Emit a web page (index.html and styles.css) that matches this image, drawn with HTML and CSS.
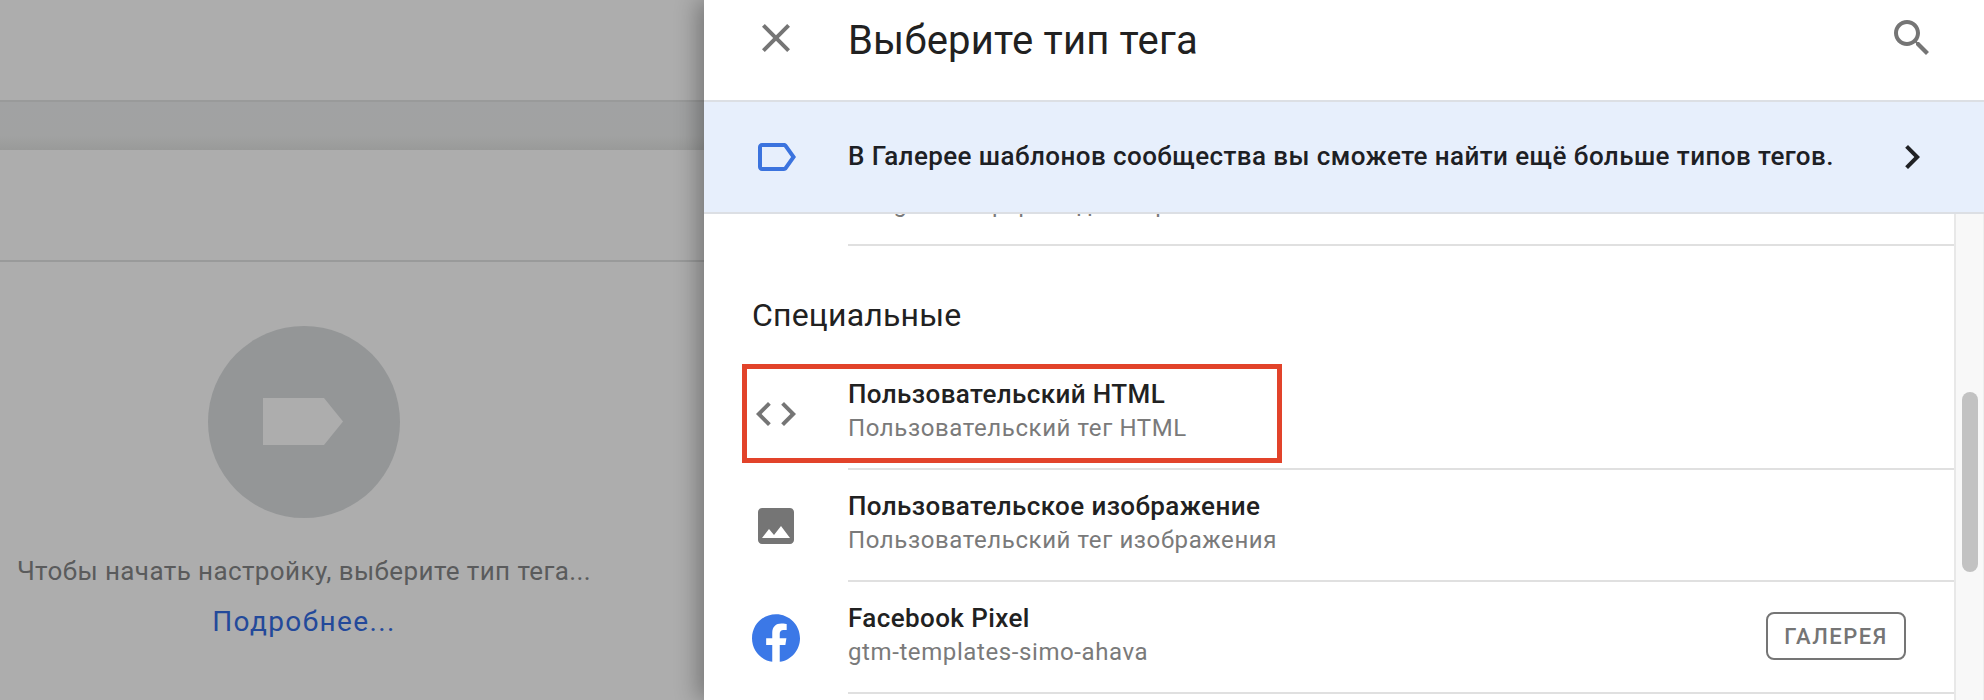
FILE: index.html
```html
<!DOCTYPE html>
<html lang="ru">
<head>
<meta charset="utf-8">
<title>Выберите тип тега</title>
<link rel="stylesheet" href="styles.css">
</head>
<body>
<div class="page">
  <section class="editor">
    <div class="editor-top"></div>
    <div class="editor-band"></div>
    <div class="editor-sub"></div>
    <div class="empty">
      <div class="empty-circle">
        <svg class="empty-tag" viewBox="0 0 80 47"><path d="M0 0H61L80 23.5 61 47H0z"/></svg>
      </div>
      <p class="empty-text">Чтобы начать настройку, выберите тип тега...</p>
      <a class="empty-link">Подробнее...</a>
    </div>
  </section>
  <aside class="panel">
    <header class="panel-head">
      <svg class="icon" viewBox="0 0 24 24"><path d="M19 6.41L17.59 5 12 10.59 6.41 5 5 6.41 10.59 12 5 17.59 6.41 19 12 13.41 17.59 19 19 17.59 13.41 12z"/></svg>
      <h1 class="panel-title">Выберите тип тега</h1>
      <svg class="icon search" viewBox="0 0 24 24"><path d="M15.5 14h-.79l-.28-.27C15.41 12.59 16 11.11 16 9.5 16 5.91 13.09 3 9.5 3S3 5.91 3 9.5 5.91 16 9.5 16c1.61 0 3.09-.59 4.23-1.57l.27.28v.79l5 4.99L20.49 19l-4.99-5zm-6 0C7.01 14 5 11.99 5 9.5S7.01 5 9.5 5 14 7.01 14 9.5 11.99 14 9.5 14z"/></svg>
    </header>
    <div class="promo">
      <svg class="icon icon-blue" viewBox="0 0 24 24"><path d="M17.63 5.84C17.27 5.33 16.67 5 16 5L5 5.01C3.9 5.01 3 5.9 3 7v10c0 1.1.9 1.99 2 1.99L16 19c.67 0 1.27-.33 1.63-.84L22 12l-4.37-6.16zM16 17H5V7h11l3.55 5L16 17z"/></svg>
      <span class="promo-text">В Галерее шаблонов сообщества вы сможете найти ещё больше типов тегов.</span>
      <svg class="icon icon-dark" viewBox="0 0 24 24"><path d="M10 6L8.59 7.41 13.17 12l-4.58 4.59L10 18l6-6z"/></svg>
    </div>
    <div class="body">
      <div class="list">
        <div class="clipped-row"><div class="row-sub">Google Обзор фото для партий</div></div>
        <h2 class="section-title">Специальные</h2>
        <div class="row">
          <svg class="icon" viewBox="0 0 24 24"><path d="M9.4 16.6L4.8 12l4.6-4.6L8 6l-6 6 6 6 1.4-1.4zm5.2 0l4.6-4.6-4.6-4.6L16 6l6 6-6 6-1.4-1.4z"/></svg>
          <div class="row-main">
            <div class="row-title">Пользовательский HTML</div>
            <div class="row-sub">Пользовательский тег HTML</div>
          </div>
          <div class="highlight"></div>
        </div>
        <div class="row">
          <svg class="icon" viewBox="0 0 24 24"><path d="M21 19V5c0-1.1-.9-2-2-2H5c-1.1 0-2 .9-2 2v14c0 1.1.9 2 2 2h14c1.1 0 2-.9 2-2zM8.5 13.5l2.5 3.01L14.5 12l4.5 6H5l3.5-4.5z"/></svg>
          <div class="row-main">
            <div class="row-title">Пользовательское изображение</div>
            <div class="row-sub">Пользовательский тег изображения</div>
          </div>
        </div>
        <div class="row">
          <svg class="icon icon-fb" viewBox="0 0 24 24"><path d="M24 12.073c0-6.627-5.373-12-12-12s-12 5.373-12 12c0 5.99 4.388 10.954 10.125 11.854v-8.385H7.078v-3.47h3.047V9.43c0-3.007 1.792-4.669 4.533-4.669 1.312 0 2.686.235 2.686.235v2.953H15.83c-1.491 0-1.956.925-1.956 1.874v2.25h3.328l-.532 3.47h-2.796v8.385C19.612 23.027 24 18.062 24 12.073z"/></svg>
          <div class="row-main">
            <div class="row-title">Facebook Pixel</div>
            <div class="row-sub">gtm-templates-simo-ahava</div>
          </div>
          <span class="badge">ГАЛЕРЕЯ</span>
        </div>
      </div>
      <div class="track"><div class="thumb"></div></div>
    </div>
  </aside>
</div>
</body>
</html>
```
FILE: styles.css
```css
* { box-sizing: border-box; }
html, body { margin: 0; height: 100%; overflow: hidden; }
body { font-family: Roboto, "Liberation Sans", sans-serif; background: #adadad; }

.page { display: flex; width: 1984px; height: 700px; }

/* dimmed page underneath */
.editor { width: 704px; flex: none; background: #adadad; }
.editor-top { height: 102px; border-bottom: 2px solid #999a9a; }
.editor-band { height: 48px; background: linear-gradient(#a1a2a3 0, #a1a2a2 70%, #999a99 100%); }
.editor-sub { height: 112px; border-bottom: 2px solid #999a9a; }
.empty { display: flex; flex-direction: column; align-items: center; padding: 64px 96px 0 0; }
.empty-circle { width: 192px; height: 192px; border-radius: 50%; background: #949697; display: flex; align-items: center; justify-content: center; }
.empty-tag { width: 80px; height: 47px; margin-left: -2px; margin-top: -2px; fill: #adadad; }
.empty-text { margin: 36px 0 0; font-size: 26px; line-height: 34px; letter-spacing: .4px; color: #5a5b5c; white-space: nowrap; }
.empty-link { margin-top: 16px; font-size: 28px; line-height: 36px; letter-spacing: 1.4px; color: #23499a; }

/* right panel */
.panel { width: 1280px; flex: none; display: flex; flex-direction: column; background: #fff; position: relative; box-shadow: -6px 0 22px rgba(0,0,0,.32); }
.icon { width: 48px; height: 48px; flex: none; fill: #757575; display: block; }
.icon-blue { fill: #3b73de; }
.icon-dark { fill: #202124; margin-top: -1px; }
.icon-fb { fill: #3b78e7; }

.panel-head { height: 100px; display: flex; align-items: center; padding: 0 48px 24px; gap: 48px; }
.panel-title { margin: 6px 0 0; flex: 1; font-size: 40px; font-weight: 400; line-height: 48px; letter-spacing: .2px; color: #212121; }

.promo { height: 114px; flex: none; display: flex; align-items: center; gap: 48px; padding: 0 48px; background: #e7effc; border-top: 2px solid #dcdfe4; border-bottom: 2px solid #dcdfe4; }
.promo-text { flex: 1; font-size: 26px; font-weight: 500; letter-spacing: .42px; color: #1d2024; margin-top: -3px; }

.body { flex: 1; min-height: 0; display: flex; overflow: hidden; }
.list { flex: 1; min-width: 0; }
.clipped-row { height: 32px; margin-left: 144px; overflow: hidden; border-bottom: 2px solid #e0e0e0; }
.clipped-row .row-sub { margin-top: -27px; }

.section-title { margin: 0 0 0 48px; height: 112px; font-size: 32px; font-weight: 400; line-height: 36px; letter-spacing: .2px; padding-top: 51px; color: #212121; }

.row { position: relative; height: 112px; display: flex; align-items: center; gap: 48px; padding: 0 48px; }
.row::after { content: ""; position: absolute; left: 144px; right: 0; bottom: 0; height: 2px; background: #e0e0e0; }
.row-main { flex: 1; min-width: 0; padding-bottom: 6px; }
.row-title { font-size: 26px; font-weight: 500; line-height: 34px; letter-spacing: .4px; color: #212121; }
.row-sub { font-size: 24px; line-height: 34px; letter-spacing: .6px; color: #7a7a7a; }

.badge { width: 140px; height: 48px; margin-top: -4px; display: flex; align-items: center; justify-content: center; border: 2px solid #757575; border-radius: 8px; font-size: 22px; font-weight: 500; letter-spacing: 1.5px; color: #757575; }

.highlight { position: absolute; left: 38px; top: 6px; width: 540px; height: 99px; border: 5px solid #e2432a; z-index: 1; }

.track { width: 30px; flex: none; background: #f8f8f8; border-left: 2px solid #e8e8e8; border-right: 1px solid #eee; padding-top: 178px; padding-left: 6px; }
.thumb { width: 16px; height: 180px; border-radius: 8px; background: #c2c2c2; }
```
